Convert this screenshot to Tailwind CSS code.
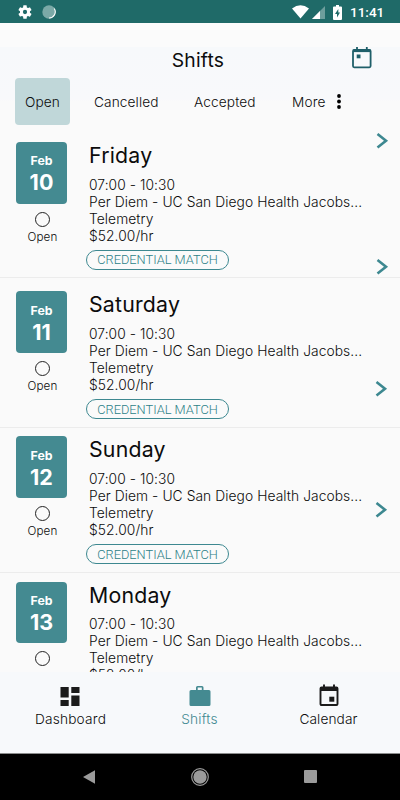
<!DOCTYPE html>
<html lang="en">
<head>
<meta charset="utf-8">
<title>Shifts</title>
<script src="https://cdn.jsdelivr.net/npm/@tailwindcss/browser@4"></script>
</head>
<body class="bg-[#fafafa] font-['Inter',sans-serif] text-[#0c0c0c]">
<div class="relative flex flex-col w-[400px] h-[800px] overflow-hidden">
  <div class="flex items-center h-[23px] shrink-0 bg-[#1f6a68] pt-px pl-[17px] pr-[16px]">
    <svg class="w-4 h-4" viewBox="0 0 24 24" fill="#fff"><path d="M19.4 13c.04-.3.06-.65.06-1s-.02-.7-.07-1l2.1-1.6c.2-.16.24-.43.12-.65l-2-3.46c-.12-.22-.37-.3-.6-.22l-2.48 1a7.3 7.3 0 0 0-1.7-.98L14.46 2.4a.5.5 0 0 0-.5-.4h-4a.5.5 0 0 0-.48.4L9.1 5.07c-.6.25-1.16.58-1.68.97l-2.5-1c-.22-.08-.47 0-.6.22l-2 3.46c-.12.22-.07.5.13.65L4.57 11c-.05.3-.08.66-.08 1s.02.7.07 1l-2.1 1.6c-.2.16-.24.43-.12.65l2 3.46c.12.22.37.3.6.22l2.48-1c.52.4 1.08.73 1.7.98l.37 2.66c.04.24.24.43.5.43h4c.24 0 .45-.18.48-.42l.37-2.66a7 7 0 0 0 1.7-.98l2.48 1c.22.08.47 0 .6-.22l2-3.46a.5.5 0 0 0-.13-.65zM12 15.2a3.2 3.2 0 1 1 0-6.4 3.2 3.2 0 0 1 0 6.4z"/></svg>
    <svg class="w-[14px] h-[14px] ml-[8.500px]" viewBox="0 0 14 14"><circle cx="7" cy="7" r="6.700" fill="#7ba9a7"/><path d="M12.200 3.500A6.100 6.100 0 0 1 7 13" fill="none" stroke="#fff" stroke-width="1.100"/></svg>
    <svg class="w-[17px] h-[14px] ml-auto" viewBox="0 0 17 14" fill="#fff"><path d="M0 3.400Q8.500-3 17 3.400L8.500 13.500z"/></svg>
    <svg class="w-[13px] h-[13px] ml-[3px]" viewBox="0 0 13 13"><path d="M13 0V13H0z" fill="#fff" opacity=".35"/><path d="M8 5v8H0z" fill="#fff"/></svg>
    <svg class="w-[9px] h-[15px] ml-[8px]" viewBox="0 0 9 15"><path d="M3 0h3v1.500h2q1 0 1 1V14q0 1-1 1H1q-1 0-1-1V2.500q0-1 1-1h2z" fill="#fff"/><path d="M5.300 4L2 8.900h2V12.500l3-5H5.300z" fill="#1f6a68"/></svg>
    <span class="ml-[8px] mt-px w-[34px] text-[13.500px] leading-none font-['Roboto'] font-medium text-white whitespace-nowrap">11:41</span>
  </div>

  <header class="flex flex-col h-[105px] shrink-0 pt-6 bg-[linear-gradient(#fbfbfb_24px,#f7f9fb_24px,#f8f9fb_76px,#fafafa_78px)]">
    <div class="relative flex items-center justify-center h-[28px] pr-[4px]">
      <h1 class="-mt-px text-[19.300px] leading-none tracking-[0.2px]">Shifts</h1>
      <svg class="absolute left-[352px] top-[0px] w-[20px] h-[22px]" viewBox="0 0 20 22" fill="none" stroke="#1e5f69" stroke-width="1.800"><rect x="1" y="3" width="17.600" height="17.300" rx="1.200"/><path d="M1 3.800h17.600" stroke-width="2.600"/><path d="M5 0v3M14.800 0v3"/><rect x="4.700" y="7.500" width="3.800" height="3.800" fill="#1e5f69" stroke="none"/></svg>
    </div>
    <nav class="flex items-center h-[47px] mt-[3px] pl-[15px] text-[13.700px] font-light whitespace-nowrap">
      <span class="flex items-center justify-center w-[55px] h-[47px] pt-px rounded bg-[#c0d7d9] tracking-[0.100px]">Open</span>
      <span class="ml-[24px] mt-px w-[100px] tracking-[0.100px]">Cancelled</span>
      <span class="mt-px w-[98px] tracking-[0.100px]">Accepted</span>
      <span class="mt-px w-[45px] tracking-[0.100px]">More</span>
      <svg class="w-[4px] h-[15px]" viewBox="0 0 4 15"><circle cx="2" cy="2" r="1.900"/><circle cx="2" cy="7.500" r="1.900"/><circle cx="2" cy="13" r="1.900"/></svg>
    </nav>
  </header>

  <main id="shifts" class="h-[544px] shrink-0 overflow-hidden"></main>

  <footer class="flex flex-col h-[81px] shrink-0 bg-[#f7f9fb]">
    <div class="grid grid-cols-[141px_117px_142px] pt-[12px] text-[13.700px] font-light leading-4">
      <div class="flex flex-col items-center gap-[5px]">
        <svg class="w-[20px] h-[22px] -ml-[2px]" viewBox="0 0 20 22" fill="#1b1b1b"><path d="M.5 3h8.200v10.500H.5zM11.300 3h8.200v6h-8.200zM.5 16h8.200v6H.5zM11.300 11.500h8.200V22h-8.200z"/></svg>
        <span class="tracking-[0.200px]">Dashboard</span>
      </div>
      <div class="flex flex-col items-center gap-[5px] text-[#3d8890]">
        <svg class="w-[22px] h-[22px]" viewBox="0 0 22 22" fill="#448a91"><path fill-rule="evenodd" d="M7 6V3.500Q7 2 8.500 2h4.500q1.500 0 1.500 1.500V6H20q1.500 0 1.500 1.500v13q0 1.500-1.500 1.500H2Q.5 22 .5 20.500v-13Q.5 6 2 6zM8.700 6h4.100V3.600H8.700z"/></svg>
        <span class="tracking-[0.200px]">Shifts</span>
      </div>
      <div class="flex flex-col items-center gap-[5px] pr-px">
        <svg class="w-[20px] h-[22px]" viewBox="0 0 20 22" fill="none" stroke="#1b1b1b" stroke-width="1.900"><rect x="1.500" y="3.500" width="17" height="17.500" rx="1"/><path d="M1.500 5h17" stroke-width="4"/><path d="M5 .5v3M15 .5v3"/><rect x="10.300" y="12.700" width="5" height="5" fill="#1b1b1b" stroke="none"/></svg>
        <span class="tracking-[0.100px]">Calendar</span>
      </div>
    </div>
  </footer>

  <div class="flex items-center h-[47px] shrink-0 bg-black border-t border-[#8b8c8c]">
    <svg class="ml-[83px] -mt-px w-[12px] h-[14px]" viewBox="0 0 12 14" fill="#9b9b9b"><path d="M12 .3v13.400L0 7z"/></svg>
    <svg class="ml-[96px] -mt-px w-[18px] h-[18px]" viewBox="0 0 18 18"><circle cx="9" cy="9" r="8.300" fill="none" stroke="#9b9b9b" stroke-width="1.200"/><circle cx="9" cy="9" r="6.700" fill="#9b9b9b"/></svg>
    <div class="ml-[95px] -mt-px w-[13px] h-[13px] rounded-[1px] bg-[#9b9b9b]"></div>
  </div>

  <div id="chevrons"></div>
</div>
<script>
const shifts = [
  { day: 'Friday', date: 10, cls: 'h-[150px] pt-[14px]' },
  { day: 'Saturday', date: 11, cls: 'h-[149.500px] pt-[13.400px]' },
  { day: 'Sunday', date: 12, cls: 'h-[145px] pt-[8.900px]' },
  { day: 'Monday', date: 13, cls: 'h-[150px] pt-[9px]' }
];
document.getElementById('shifts').innerHTML = shifts.map(s => `
  <article class="flex pl-[16px] border-b border-[#ececec] ${s.cls}">
    <div class="flex flex-col items-center w-[52px] shrink-0">
      <div class="flex flex-col items-center w-[51px] -ml-px h-[61.500px] rounded-[4px] bg-[#448a91] pt-[12.300px] text-white font-bold">
        <span class="text-[12.300px] leading-[14px]">Feb</span>
        <span class="text-[21.500px] leading-[24px] mt-[2px]">${s.date}</span>
      </div>
      <div class="mt-[8px] w-[15px] h-[15px] shrink-0 rounded-full border border-[#222]"></div>
      <span class="mt-[3.600px] text-[11.700px] leading-[14px] font-light tracking-[0.050px] ml-px">Open</span>
    </div>
    <div class="ml-[21px] w-[285px] whitespace-nowrap">
      <h2 class="text-[21.300px] leading-[26px] tracking-[0.2px]">${s.day}</h2>
      <div class="mt-[8.600px] text-[13.800px] leading-[17.100px] font-light tracking-[0.070px]">
        <p>07:00 - 10:30</p>
        <p>Per Diem - UC San Diego Health Jacobs...</p>
        <p>Telemetry</p>
        <p>$52.00/hr</p>
      </div>
      <span class="flex items-center justify-center -ml-[3px] mt-[4.600px] w-[143px] h-[20px] pt-px rounded-full border border-[#3d8890] text-[12.800px] font-['Roboto'] font-light text-[#2c7f87]">CREDENTIAL MATCH</span>
    </div>
  </article>`).join('');
const chevrons = [[376, 133], [376, 259], [375, 381], [375, 502]];
document.getElementById('chevrons').innerHTML = chevrons.map(([x, y]) => `
  <svg class="absolute w-[13px] h-[16px]" style="left:${x}px;top:${y}px" viewBox="0 0 13 16" fill="none" stroke="#3d8890" stroke-width="2.600"><path d="M1.500 1l8.500 6.700L1.500 14.500"/></svg>`).join('');
</script>
</body>
</html>
